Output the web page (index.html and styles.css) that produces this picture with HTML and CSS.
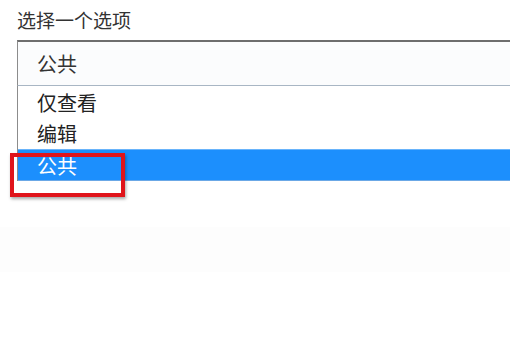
FILE: index.html
```html
<!DOCTYPE html>
<html lang="zh-CN">
<head>
    <meta charset="UTF-8">
    <meta name="viewport" content="width=device-width, initial-scale=1.0">
    <title>选择一个选项</title>
    <link rel="stylesheet" href="styles.css">
</head>
<body>
    <div class="page">
        <div class="field">
            <label class="field-label">选择一个选项</label>
            <div class="select">公共</div>
            <ul class="options">
                <li class="option">仅查看</li>
                <li class="option">编辑</li>
                <li class="option selected">公共</li>
            </ul>
        </div>

        <!-- annotation box over the picked option -->
        <div class="mark"></div>

        <div class="band"></div>
    </div>
</body>
</html>
```

FILE: styles.css
```css
body {
    margin: 0;
    background: #fff;
    font-family: "Noto Sans CJK SC", "Noto Sans", sans-serif;
    color: #222;
}

.page {
    position: relative;
    width: 510px;
    height: 340px;
    overflow: hidden;
}

.field {
    padding: 8px 0 0 17px;
}

.field-label {
    display: block;
    font-size: 19px;
    line-height: 23px;
    color: #333;
}

.select {
    display: flex;
    align-items: center;
    height: 43px;
    margin-top: 9px;
    padding-left: 19px;
    border-top: 2px solid #6e6e6e;
    border-left: 1px solid #8c8c8c;
    background: #fbfcfd;
    font-size: 20px;
    color: #333;
}

.options {
    list-style: none;
    margin: 0;
    padding: 0;
    border-top: 1px solid #a8b6c4;
    border-left: 1px solid #8c8c8c;
    background: #fff;
}

.option {
    display: flex;
    align-items: center;
    height: 31px;
    padding-left: 19px;
    font-size: 20px;
}

.option:first-child {
    height: 32px;
}

.option.selected {
    height: 30px;
    background: #1c8ffd;
    border-top: 1px solid #69b4fb;
    border-bottom: 1px solid #6ba8e6;
    color: #fff;
}

.mark {
    position: absolute;
    left: 10px;
    top: 153px;
    width: 107px;
    height: 36px;
    border: 4px solid #e0141b;
    box-shadow: 1px 2px 3px rgba(0, 0, 0, 0.35);
}

.band {
    margin-top: 46px;
    height: 45px;
    background: #fdfdfd;
}
```
